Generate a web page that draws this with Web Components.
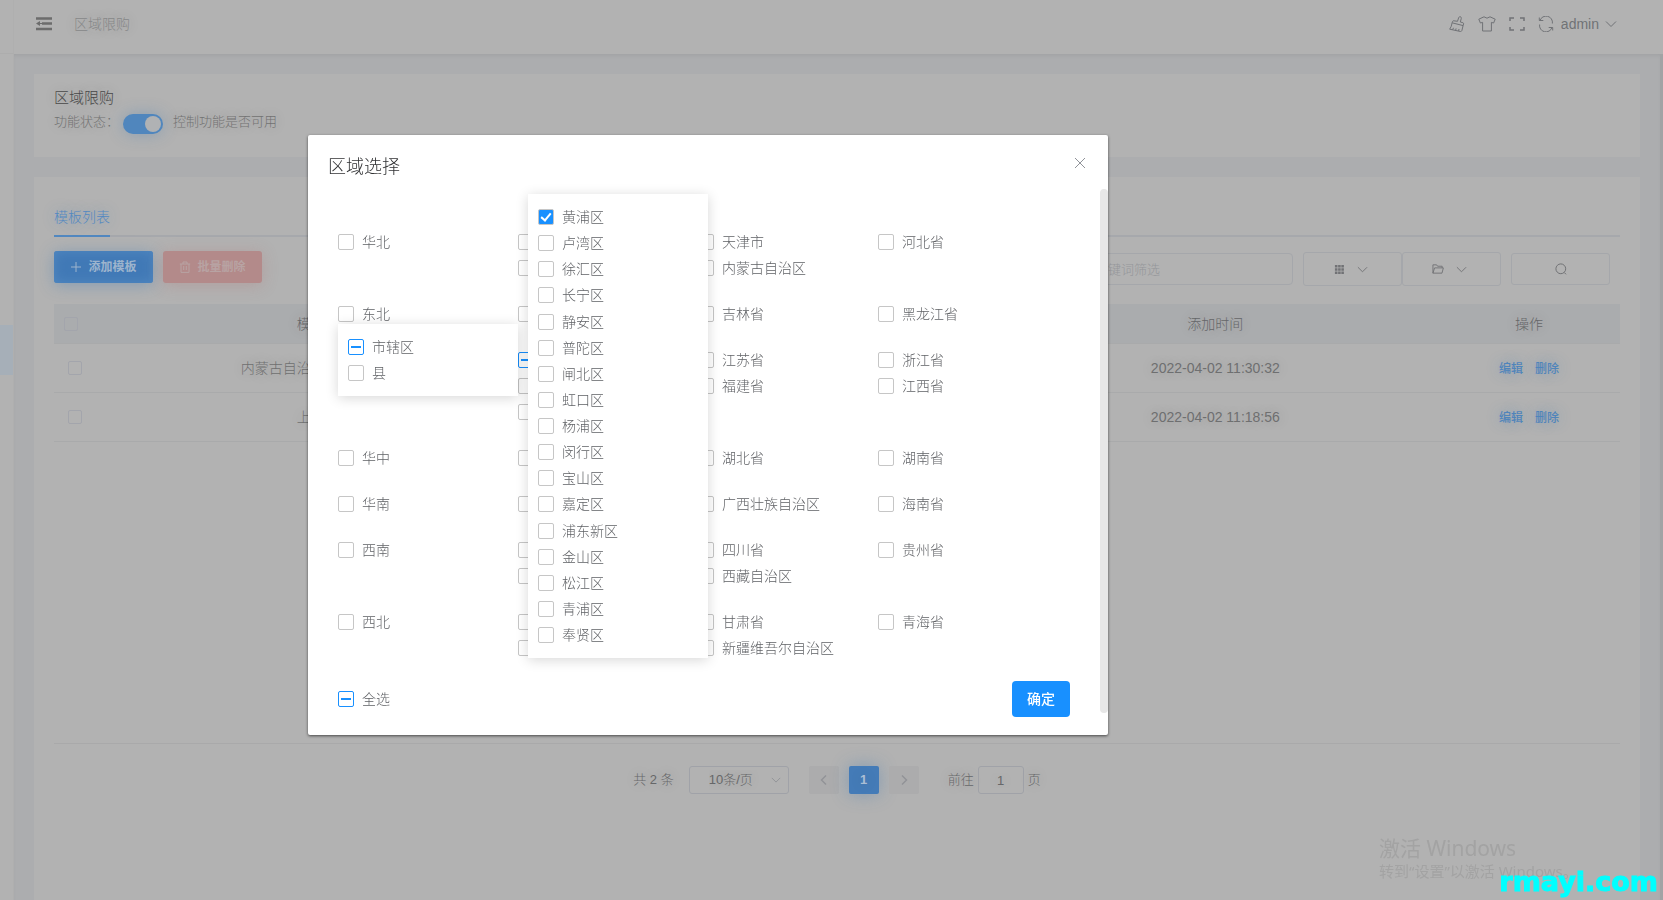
<!DOCTYPE html>
<html lang="zh-CN">
<head>
<meta charset="utf-8">
<title>区域限购</title>
<style>
  html, body { height: 100%; margin: 0; }
  body {
    font: 300 14px/20px "Liberation Sans", "Noto Sans CJK SC", sans-serif;
    color: #6e6f70;
    background: #acadaf;
    overflow: hidden;
  }
</style>
</head>
<body>
<app-shell>
  <app-header slot="header" heading="区域限购" user="admin"></app-header>
  <status-card></status-card>
  <template-card></template-card>
</app-shell>
<region-dialog heading="区域选择"></region-dialog>
<activation-note></activation-note>
<site-mark>rmayi.com</site-mark>

<script>
const define = (name, render, after) => customElements.define(name, class extends HTMLElement {
  constructor() { super(); this.attachShadow({ mode: 'open' }); }
  connectedCallback() {
    const t = document.createElement('template');
    t.innerHTML = render(this);
    this.shadowRoot.replaceChildren(t.content.cloneNode(true));
    if (after) after(this, this.shadowRoot);
  }
});

/* ---------- icons ---------- */
const ICONS = {
  fold: ['0 0 16 14', '<path d="M0 1.5h16M6 6.5h10M0 12h16" stroke-width="2.4"/><path d="M0 6.5L4 4v5z" fill="currentColor" stroke="none"/><path d="M3 6.5h4" stroke-width="1"/>'],
  brush: ['0 0 16 16', '<path d="M8.500 5.300L9.700 1.600Q10.200.500 11.300.700T12.300 2.400L11.300 6l2.600.7q.9.300.700 1.200l-.5 1.700L3.100 6.800l.4-1.300Q3.800 4.600 4.800 4.800L8.500 5.300M3.100 6.800Q2.600 10.500.7 13.200l10.800 2.300q1 0 1.400-1l1.200-4.900M3.600 13.800l.9-2M6.600 14.400l.5-2M9.600 15l.4-2"/>'],
  shirt: ['0 0 18 16', '<path d="M6 .8L.8 3.200 2.400 7l2.200-.6V15h8.800V6.400l2.200.6 1.600-3.800L12 .8Q9 3.600 6 .8z"/>'],
  full: ['0 0 16 14', '<path d="M1 4V1h4M11 1h4v3M15 10v3h-4M5 13H1v-3" stroke-width="1.500"/>'],
  refresh: ['0 0 16 16', '<path d="M1.300 4.500h4M1.300 4.500V1.500M2 4.500A6.400 6.400 0 0 1 14.400 7.500M14.700 11.500h-4M14.700 11.500v3M14 11.500A6.400 6.400 0 0 1 1.600 8.500"/>'],
  down: ['0 0 12 12', '<path d="M1 3.500l5 5 5-5"/>'],
  left: ['0 0 12 12', '<path d="M8 1.500L3.500 6 8 10.500" stroke-width="1.500"/>'],
  right: ['0 0 12 12', '<path d="M4 1.500L8.500 6 4 10.500" stroke-width="1.500"/>'],
  plus: ['0 0 12 12', '<path d="M6 1v10M1 6h10"/>'],
  trash: ['0 0 12 12', '<path d="M.8 3h10.400M4 3V1h4v2M2 3v8.400h8V3M4.700 5v4M7.300 5v4"/>'],
  grid: ['0 0 12 12', '<path d="M1 2.500h10M1 6h10M1 9.500h10" stroke-width="2.800" stroke-dasharray="2.800 .700"/>'],
  folder: ['0 0 13 12', '<path d="M1 10.500V1.500h4l1 1.500h5v1.800M1 10.500L2.800 4.800H12.300L10.800 10.500z"/>'],
  search: ['0 0 12 12', '<circle cx="5.800" cy="5.800" r="4.900"/><path d="M9.300 9.500l1.700 1.800"/>'],
  close: ['0 0 12 12', '<path d="M1 1l10 10M11 1L1 11"/>']
};
define('ui-icon', el => {
  const [box, body] = ICONS[el.getAttribute('name')];
  return `<style>
    :host { display: inline-block; flex: none; width: 12px; height: 12px; }
    svg { display: block; width: 100%; height: 100%; fill: none; stroke: currentColor; stroke-width: 1; }
  </style><svg viewBox="${box}" aria-hidden="true">${body}</svg>`;
});

/* ---------- tick box with a label ---------- */
define('check-item', el => `<style>
    :host { display: block; color: #606266; }
    label { display: flex; align-items: center; gap: 8px; height: 100%; min-height: 26px; white-space: nowrap; }
    input {
      appearance: none; flex: none; box-sizing: border-box; margin: 0;
      display: grid; place-content: center;
      width: var(--box, 16px); height: var(--box, 16px);
      border: 1px solid var(--box-line, #c6c6c6); border-radius: 2px; background: var(--box-fill, #fff);
    }
    input:checked { background: #1890ff; }
    input:checked::before {
      content: ""; width: 4px; height: 8px; margin-bottom: 2px;
      border: solid #fff; border-width: 0 2px 2px 0; transform: rotate(40deg);
    }
    input:indeterminate { border-color: #1890ff; }
    input:indeterminate::before { content: ""; width: 10px; height: 2px; background: #1890ff; }
  </style>
  <label><input type="checkbox" aria-label="${el.textContent.trim() || '选择'}"><slot></slot></label>`,
  (el, root) => {
    const box = root.querySelector('input');
    box.checked = el.hasAttribute('checked');
    box.indeterminate = el.hasAttribute('partial');
  });

/* ---------- page frame ---------- */
define('app-shell', () => `<style>
    :host { display: grid; grid-template: 54px 1fr / 14px 1fr; height: 100vh; text-shadow: 0 0 14px rgba(70,70,70,.2); }
    .brand, aside { background: #b2b2b2; border-right: 1px solid #afafaf; box-sizing: border-box; }
    .brand { border-bottom: 1px solid #adadad; }
    aside { padding-top: 271px; }
    aside a { display: block; height: 50px; background: #a6afb8; }
    main {
      display: flex; flex-direction: column; gap: 20px; min-height: 0;
      padding: 20px 20px 0; border-right: 3px solid #a1a3a5;
      box-shadow: inset 0 3px 4px -2px rgba(0,0,0,.08);
    }
  </style>
  <div class="brand"></div>
  <slot name="header"></slot>
  <aside><a href="#" aria-label="菜单"></a></aside>
  <main><slot></slot></main>`);

define('app-header', el => `<style>
    :host {
      display: flex; align-items: center; justify-content: space-between; box-sizing: border-box;
      padding: 0 46px 6px 22px; background: #b2b2b2; color: #707276;
    }
    div { display: flex; align-items: center; gap: 13px; }
    .title { gap: 22px; color: #868788; }
    button { display: block; padding: 0; border: 0; background: none; color: inherit; font: inherit; }
    ui-icon { display: block; width: 16px; height: 16px; }
    .fold { height: 14px; color: #6c6c6c; }
    .shirt { width: 18px; }
    .full { height: 14px; }
    .user { display: flex; align-items: center; gap: 6px; margin-left: -6px; }
    .user ui-icon { width: 12px; height: 12px; }
  </style>
  <div class="title"><button aria-label="收起菜单"><ui-icon class="fold" name="fold"></ui-icon></button><span>${el.getAttribute('heading')}</span></div>
  <div>
    <button aria-label="清理"><ui-icon name="brush"></ui-icon></button>
    <button aria-label="主题"><ui-icon class="shirt" name="shirt"></ui-icon></button>
    <button aria-label="全屏"><ui-icon class="full" name="full"></ui-icon></button>
    <button aria-label="刷新"><ui-icon name="refresh"></ui-icon></button>
    <button class="user">${el.getAttribute('user')}<ui-icon name="down"></ui-icon></button>
  </div>`);

/* ---------- feature switch ---------- */
define('status-card', () => `<style>
    :host { display: block; box-sizing: border-box; flex: none; height: 83px; padding: 14px 20px; background: #b2b2b2; font-size: 13px; color: #727272; }
    h1 { margin: 0; font-size: 15px; font-weight: inherit; line-height: 20px; color: #484848; }
    label { display: flex; align-items: center; gap: 4px; line-height: 28px; }
    input {
      appearance: none; box-sizing: border-box; width: 40px; height: 20px; margin: 4px 6px 0 0; padding: 2px;
      border-radius: 10px; background: #5086bd; box-shadow: 0 0 16px rgba(60,120,180,.35);
      display: flex; justify-content: flex-end;
    }
    input::before { content: ""; width: 16px; height: 16px; border-radius: 50%; background: #b0b2b4; }
  </style>
  <h1>区域限购</h1>
  <label><span>功能状态：</span><input type="checkbox" role="switch" checked><span>控制功能是否可用</span></label>`);

/* ---------- list of templates ---------- */
define('template-card', () => `<style>
    :host { display: flex; flex-direction: column; flex: 1; min-height: 0; padding: 20px 20px 0; background: #b2b2b2; }
    nav { display: flex; height: 38px; border-bottom: 2px solid #a6a8ac; }
    nav a { height: 38px; line-height: 40px; border-bottom: 2px solid #5288c0; color: #5288c2; text-decoration: none; text-shadow: 0 0 14px rgba(60,120,180,.4); }
    .bar { display: flex; justify-content: space-between; height: 35px; margin: 14px 0 18px; }
    .group { display: flex; align-items: center; align-self: flex-start; gap: 10px; }
    .right { align-self: flex-end; padding-right: 10px; }
    .pair { display: flex; }
    button, input { box-sizing: border-box; font: inherit; }
    .bar button {
      display: flex; align-items: center; justify-content: center; gap: 6px; width: 99px; height: 32px; padding: 0;
      border: 1px solid #a5a7ab; border-radius: 3px; background: none; color: #717275; font-size: 12px;
    }
    .bar .pair button { height: 34px; gap: 12px; padding-right: 4px; }
    .pair ui-icon[name="grid"], .pair ui-icon[name="down"] { width: 11px; height: 11px; }
    .bar .add, .bar .remove { border: 0; font-weight: 700; }
    .bar .add { background: #4179b6; color: #9db4cd; box-shadow: inset 0 0 12px #5289c1, 0 2px 16px rgba(60,120,180,.4); }
    .bar .remove { background: #b38a8a; color: #b8a3a3; box-shadow: 0 2px 16px rgba(180,110,110,.3); }
    input { width: 214px; height: 32px; padding: 0 15px; border: 1px solid #a5a7ab; border-radius: 4px; background: none; font-size: 13px; }
    input::placeholder { color: #94969a; opacity: 1; }
    .sheet { height: calc(100vh - 460px); min-height: 160px; box-sizing: border-box; border-bottom: 1px solid #a9a9aa; }
    table { width: 100%; border-collapse: collapse; table-layout: fixed; text-align: center; }
    th { height: 39px; padding: 0; font-weight: inherit; background: #aaacae; color: #656668; }
    td { height: 48px; padding: 0; }
    th, td { border-bottom: 1px solid #a9aaab; }
    .tick { width: 48px; }
    .ops { width: 182px; }
    check-item { --box: 14px; --box-line: #a3a5ac; --box-fill: transparent; padding-left: 14px; }
    th check-item { padding-left: 10px; }
    td a { margin: 0 4px; font-size: 12px; font-weight: 500; color: #4f84bb; text-decoration: none; text-shadow: 0 0 14px rgba(60,120,180,.4); }
  </style>
  <nav><a href="#">模板列表</a></nav>
  <div class="bar">
    <div class="group">
      <button class="add"><ui-icon name="plus"></ui-icon>添加模板</button>
      <button class="remove"><ui-icon name="trash"></ui-icon>批量删除</button>
    </div>
    <div class="group right">
      <input type="text" placeholder="关键词筛选" aria-label="关键词筛选">
      <div class="pair">
        <button aria-label="列设置"><ui-icon name="grid"></ui-icon><ui-icon name="down"></ui-icon></button>
        <button aria-label="导出"><ui-icon name="folder"></ui-icon><ui-icon name="down"></ui-icon></button>
      </div>
      <button aria-label="搜索"><ui-icon name="search"></ui-icon></button>
    </div>
  </div>
  <div class="sheet">
    <table>
      <thead><tr><th class="tick"><check-item></check-item></th><th>模板名称</th><th></th><th>添加时间</th><th class="ops">操作</th></tr></thead>
      <tbody>
        <tr><td><check-item></check-item></td><td>内蒙古自治区区域限购模板</td><td></td><td>2022-04-02 11:30:32</td><td><a href="#">编辑</a> <a href="#">删除</a></td></tr>
        <tr><td><check-item></check-item></td><td>上海限购</td><td></td><td>2022-04-02 11:18:56</td><td><a href="#">编辑</a> <a href="#">删除</a></td></tr>
      </tbody>
    </table>
  </div>
  <page-nav></page-nav>`);

define('page-nav', () => `<style>
    :host { display: flex; align-items: center; justify-content: center; height: 28px; margin-top: 22px; font-size: 13px; color: #666769; }
    button, input, select { box-sizing: border-box; height: 28px; font: inherit; color: inherit; text-shadow: inherit; }
    .size { display: grid; grid-template: 28px / 100px; align-items: center; margin: 0 20px 0 15px; }
    .size > * { grid-area: 1 / 1; }
    select { appearance: none; width: 100px; padding: 0 0 0 19px; border: 1px solid #a0a2a8; border-radius: 3px; background: none; }
    .size ui-icon { justify-self: end; margin-right: 8px; color: #8d8f94; width: 10px; height: 10px; }
    .pages { display: flex; gap: 10px; margin-right: 29px; }
    button { display: grid; place-items: center; width: 30px; padding: 0; border: 0; border-radius: 2px; background: #acacad; color: #929397; }
    button.on { background: #447bb7; color: #aabed4; font-weight: 700; box-shadow: 0 0 18px rgba(60,120,180,.4); }
    label { display: flex; align-items: center; gap: 4px; }
    input { width: 46px; padding: 0; border: 1px solid #a0a2a8; border-radius: 3px; background: none; text-align: center; }
  </style>
  <span>共 2 条</span>
  <div class="size"><select aria-label="每页条数"><option>10条/页</option></select><ui-icon name="down"></ui-icon></div>
  <div class="pages">
    <button aria-label="上一页"><ui-icon name="left"></ui-icon></button>
    <button class="on">1</button>
    <button aria-label="下一页"><ui-icon name="right"></ui-icon></button>
  </div>
  <label>前往<input type="text" value="1">页</label>`);

/* ---------- region picker ---------- */
const REGIONS = [
  ['华北', ['北京市', '天津市', '河北省', '山西省', '内蒙古自治区']],
  ['东北', ['辽宁省', '吉林省', '黑龙江省']],
  ['华东', ['上海市', '江苏省', '浙江省', '安徽省', '福建省', '江西省', '山东省']],
  ['华中', ['河南省', '湖北省', '湖南省']],
  ['华南', ['广东省', '广西壮族自治区', '海南省']],
  ['西南', ['重庆市', '四川省', '贵州省', '云南省', '西藏自治区']],
  ['西北', ['陕西省', '甘肃省', '青海省', '宁夏回族自治区', '新疆维吾尔自治区']]
];
const DISTRICTS = ['黄浦区', '卢湾区', '徐汇区', '长宁区', '静安区', '普陀区', '闸北区', '虹口区', '杨浦区', '闵行区', '宝山区', '嘉定区', '浦东新区', '金山区', '松江区', '青浦区', '奉贤区'];
const PARTIAL = ['华东', '上海市', '市辖区'];
const item = n => `<check-item${PARTIAL.includes(n) ? ' partial' : ''}${n === '黄浦区' ? ' checked' : ''}>${n}</check-item>`;

define('region-group', el => {
  const [name, list] = REGIONS.find(r => r[0] === el.getAttribute('name'));
  return `<style>
    :host { display: grid; grid-template-columns: 180px 540px; align-items: start; }
    .list { display: grid; grid-template-columns: repeat(3, 180px); }
  </style>${item(name)}<div class="list">${list.map(item).join('')}</div>`;
});

define('pop-list', () => `<style>
    :host {
      position: absolute; box-sizing: border-box; width: 180px; padding: 10px;
      display: flex; flex-direction: column;
      background: #fff; box-shadow: 0 2px 12px rgba(0,0,0,.16);
    }
    ::slotted(*) { flex: 1; }
  </style><slot></slot>`);

define('region-dialog', el => `<style>
    :host { position: fixed; inset: 0; padding: 15vh 0 0 308px; }
    section {
      position: relative; box-sizing: border-box; width: 800px; height: 600px; border-radius: 2px;
      display: flex; flex-direction: column; background: #fff;
      box-shadow: 0 1px 3px rgba(0,0,0,.6);
    }
    header { display: flex; align-items: center; justify-content: space-between; height: 56px; padding: 0 20px; box-sizing: border-box; }
    h2 { margin: 8px 0 0; font-size: 18px; font-weight: inherit; line-height: 24px; color: #303133; }
    button { border: 0; padding: 0; font: inherit; }
    .close { padding: 2px; background: none; color: #909399; }
    .close ui-icon { display: block; }
    .body { flex: 1; display: flex; flex-direction: column; gap: 20px; padding: 38px 30px 0; border-right: 8px solid transparent; }
    .track { position: absolute; right: 0; top: 54px; width: 8px; height: 524px; border-radius: 4px; background: #e7e7e7; }
    footer { display: flex; align-items: center; justify-content: space-between; height: 36px; }
    .ok { width: 58px; height: 36px; border-radius: 4px; background: #1890ff; color: #fff; font-weight: 500; }
    .cities { left: 30px; top: 189px; }
    .districts { left: 220px; top: 59px; height: 464px; }
  </style>
  <section role="dialog" aria-label="${el.getAttribute('heading')}">
    <header><h2>${el.getAttribute('heading')}</h2><button class="close" aria-label="关闭"><ui-icon name="close"></ui-icon></button></header>
    <div class="body">
      ${REGIONS.map(r => `<region-group name="${r[0]}"></region-group>`).join('')}
      <footer><check-item partial>全选</check-item><button class="ok">确定</button></footer>
    </div>
    <div class="track"></div>
    <pop-list class="cities">${['市辖区', '县'].map(item).join('')}</pop-list>
    <pop-list class="districts">${DISTRICTS.map(item).join('')}</pop-list>
  </section>`);

/* ---------- overlays in the lower right corner ---------- */
define('activation-note', () => `<style>
    :host { position: fixed; right: 90px; bottom: 18px; width: 194px; color: #a3a3a3; font-family: "Noto Sans", "Noto Sans CJK SC", sans-serif; font-weight: 400; white-space: nowrap; pointer-events: none; }
    p { margin: 0; font-size: 15px; line-height: 22px; }
    .big { font-size: 21px; line-height: 24px; }
  </style><p class="big">激活 Windows</p><p>转到“设置”以激活 Windows。</p>`);

define('site-mark', () => `<style>
    :host { position: fixed; right: 5px; bottom: 4px; font: 700 27px/28px "DejaVu Sans", sans-serif; color: #0ff; -webkit-text-stroke: 1px #0ff; pointer-events: none; }
  </style><slot></slot>`);
</script>
</body>
</html>
